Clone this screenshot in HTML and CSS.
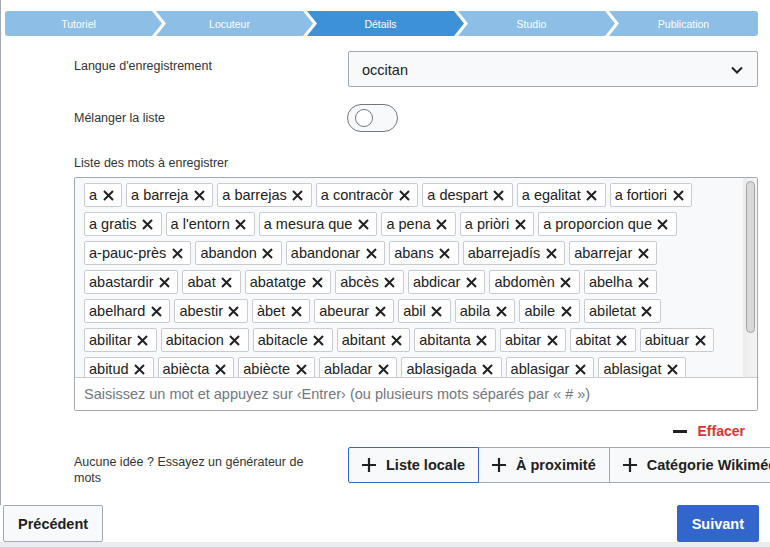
FILE: index.html
```html
<!DOCTYPE html>
<html lang="fr">
<head>
<meta charset="utf-8">
<title>Détails</title>
<link rel="stylesheet" href="styles.css">
</head>
<body>
<div class="page">
  <div class="main">
    <nav class="stepper">
      <div class="step step-first">Tutoriel</div>
      <div class="step">Locuteur</div>
      <div class="step step-active">Détails</div>
      <div class="step">Studio</div>
      <div class="step step-last">Publication</div>
    </nav>

    <div class="form">
      <div class="row row-lang">
        <div class="label label-top">Langue d'enregistrement</div>
        <div class="select">
          <span>occitan</span>
          <svg class="chev" width="12" height="8" viewBox="0 0 12 8"><path d="M1 1.5l5 5 5-5" fill="none" stroke="#202122" stroke-width="2"/></svg>
        </div>
      </div>

      <div class="row row-shuffle">
        <div class="label">Mélanger la liste</div>
        <div class="toggle"><span class="knob"></span></div>
      </div>

      <div class="words">
        <div class="label">Liste des mots à enregistrer</div>
        <div class="wordbox">
          <div class="tagarea">
            <div class="tags" id="tags"></div>
            <div class="scrollbar"><div class="thumb"></div></div>
          </div>
          <div class="wordinput">Saisissez un mot et appuyez sur ‹Entrer› (ou plusieurs mots séparés par «&nbsp;#&nbsp;»)</div>
        </div>
        <div class="clear-row">
          <button class="clear">
            <svg width="14" height="3" viewBox="0 0 14 3"><rect width="14" height="3" fill="#202122"/></svg>
            <span>Effacer</span>
          </button>
        </div>
      </div>

      <div class="row row-gen">
        <div class="label label-top">Aucune idée ? Essayez un générateur de mots</div>
        <div class="btn-group">
          <button class="gbtn gbtn-focus"><svg width="14" height="14" viewBox="0 0 14 14"><path d="M7 0v14M0 7h14" stroke="#202122" stroke-width="2.2"/></svg><span>Liste locale</span></button>
          <button class="gbtn"><svg width="14" height="14" viewBox="0 0 14 14"><path d="M7 0v14M0 7h14" stroke="#202122" stroke-width="2.2"/></svg><span>À proximité</span></button>
          <button class="gbtn"><svg width="14" height="14" viewBox="0 0 14 14"><path d="M7 0v14M0 7h14" stroke="#202122" stroke-width="2.2"/></svg><span>Catégorie Wikimédia</span></button>
        </div>
      </div>
    </div>
  </div>

  <footer class="footer">
    <button class="nav-btn">Précédent</button>
    <button class="nav-btn nav-primary">Suivant</button>
  </footer>
  <div class="band"></div>
</div>
<script src="script.js"></script>
</body>
</html>
```

FILE: script.js
```js
(function () {
  var rows = [
    ["a", "a barreja", "a barrejas", "a contracòr", "a despart", "a egalitat", "a fortiori"],
    ["a gratis", "a l'entorn", "a mesura que", "a pena", "a priòri", "a proporcion que"],
    ["a-pauc-près", "abandon", "abandonar", "abans", "abarrejadís", "abarrejar"],
    ["abastardir", "abat", "abatatge", "abcès", "abdicar", "abdomèn", "abelha"],
    ["abelhard", "abestir", "àbet", "abeurar", "abil", "abila", "abile", "abiletat"],
    ["abilitar", "abitacion", "abitacle", "abitant", "abitanta", "abitar", "abitat", "abituar"],
    ["abitud", "abiècta", "abiècte", "abladar", "ablasigada", "ablasigar", "ablasigat"]
  ];
  var box = document.getElementById("tags");
  var svgNS = "http://www.w3.org/2000/svg";
  rows.forEach(function (row) {
    var line = document.createElement("div");
    line.className = "tag-row";
    row.forEach(function (w) {
      var tag = document.createElement("span");
      tag.className = "tag";
      var t = document.createElement("span");
      t.className = "tag-text";
      t.textContent = w;
      var x = document.createElement("span");
      x.className = "tag-x";
      var svg = document.createElementNS(svgNS, "svg");
      svg.setAttribute("width", "11");
      svg.setAttribute("height", "11");
      svg.setAttribute("viewBox", "0 0 11 11");
      var p = document.createElementNS(svgNS, "path");
      p.setAttribute("d", "M1 1L10 10M10 1L1 10");
      p.setAttribute("stroke", "#202122");
      p.setAttribute("stroke-width", "2");
      p.setAttribute("fill", "none");
      svg.appendChild(p);
      x.appendChild(svg);
      tag.appendChild(t);
      tag.appendChild(x);
      line.appendChild(tag);
    });
    box.appendChild(line);
  });
})();
```

FILE: styles.css
```css
html, body {
  margin: 0;
  padding: 0;
  background: #fff;
  overflow: hidden;
}
body {
  font-family: "Liberation Sans", Arial, sans-serif;
  color: #202122;
  width: 770px;
  height: 547px;
}
button {
  font-family: inherit;
}

.main {
  box-sizing: border-box;
  height: 505px;
  border-left: 1px solid #a2a9b1;
  padding-top: 11px;
  overflow: hidden;
}

/* stepper */
.stepper {
  display: flex;
  margin-left: 4px;
  width: 753px;
  height: 25px;
}
.step {
  box-sizing: border-box;
  width: 157px;
  flex: none;
  margin-right: -6px;
  height: 25px;
  line-height: 26px;
  padding-right: 10px;
  text-align: center;
  font-size: 10.5px;
  color: #fff;
  background: #8cbee6;
  clip-path: polygon(0 0, calc(100% - 10px) 0, 100% 50%, calc(100% - 10px) 100%, 0 100%, 10px 50%);
}
.step-first {
  border-radius: 3px 0 0 3px;
  clip-path: polygon(0 0, calc(100% - 10px) 0, 100% 50%, calc(100% - 10px) 100%, 0 100%);
}
.step-last {
  flex: 1;
  width: auto;
  margin-right: 0;
  padding-right: 0;
  border-radius: 0 3px 3px 0;
  clip-path: polygon(0 0, 100% 0, 100% 100%, 0 100%, 10px 50%);
}
.step-active {
  background: #3d91d6;
}

/* form */
.form {
  margin-left: 73px;
  width: 684px;
}
.row {
  display: grid;
  grid-template-columns: 250px 410px;
  column-gap: 24px;
}
.label {
  font-size: 12.5px;
  line-height: 16px;
  color: #333;
}
.label-top {
  padding-top: 7px;
}
.row-lang {
  margin-top: 15px;
}
.select {
  box-sizing: border-box;
  height: 36px;
  display: flex;
  align-items: center;
  justify-content: space-between;
  padding: 1px 14px 0 13px;
  background: #f8f9fa;
  border: 1px solid #a2a9b1;
  border-radius: 2px;
  font-size: 14.5px;
  color: #202122;
}
.row-shuffle {
  margin-top: 17px;
  align-items: center;
}
.toggle {
  box-sizing: border-box;
  width: 51px;
  height: 28px;
  margin-left: -1px;
  border: 1px solid #72777d;
  border-radius: 14px;
  background: #f8f9fa;
  display: flex;
  align-items: center;
  padding-left: 7px;
}
.knob {
  box-sizing: border-box;
  width: 18px;
  height: 18px;
  border-radius: 50%;
  border: 1px solid #72777d;
  background: #fff;
}

/* word list */
.words {
  margin-top: 23px;
}
.wordbox {
  margin-top: 6px;
  border: 1px solid #a2a9b1;
  border-radius: 2px;
}
.tagarea {
  display: flex;
  height: 199px;
  background: #f8f9fa;
}
.tags {
  flex: 1;
  display: flex;
  flex-direction: column;
  gap: 5px;
  padding: 5px 8px 0 9px;
  overflow: hidden;
}
.tag-row {
  display: flex;
  gap: 4px;
  flex: none;
}
.tag {
  box-sizing: border-box;
  display: inline-flex;
  align-items: center;
  height: 24px;
  padding: 0 2px 0 4px;
  border: 1px solid #c8ccd1;
  border-radius: 2px;
  background: #fff;
  font-size: 14.5px;
  color: #202122;
  white-space: nowrap;
  flex: none;
}
.tag-x {
  width: 22px;
  display: flex;
  justify-content: center;
  align-items: center;
}
.scrollbar {
  box-sizing: border-box;
  width: 14px;
  flex: none;
  background: linear-gradient(to right, #ececec, #f4f4f4);
  padding: 3px 2px 0 3px;
}
.thumb {
  box-sizing: border-box;
  height: 152px;
  border: 1px solid #a3a3a3;
  border-radius: 5px;
  background: #d9d9d9;
}
.wordinput {
  box-sizing: border-box;
  height: 33px;
  border-top: 1px solid #c8ccd1;
  background: #fff;
  display: flex;
  align-items: center;
  padding-left: 9px;
  font-size: 14.5px;
  color: #72777d;
  white-space: nowrap;
}
.clear-row {
  display: flex;
  justify-content: flex-end;
  margin-top: 10px;
  padding-right: 13px;
}
.clear {
  display: flex;
  align-items: center;
  gap: 11px;
  border: 0;
  background: none;
  padding: 0;
  height: 20px;
  font-size: 14px;
  font-weight: bold;
  color: #d33;
}

/* generators */
.row-gen {
  margin-top: 6px;
}
.btn-group {
  display: flex;
  white-space: nowrap;
}
.gbtn {
  box-sizing: border-box;
  height: 36px;
  display: flex;
  align-items: center;
  gap: 10px;
  padding: 0 13px;
  margin-left: -1px;
  background: #f8f9fa;
  border: 1px solid #a2a9b1;
  font-size: 14.5px;
  font-weight: bold;
  color: #202122;
  flex: none;
}
.gbtn-focus {
  margin-left: 0;
  position: relative;
  z-index: 1;
  border-color: #36c;
  border-radius: 2px 0 0 2px;
}

/* footer */
.footer {
  display: flex;
  justify-content: space-between;
  height: 37px;
  padding: 0 11px 0 3px;
}
.nav-btn {
  box-sizing: border-box;
  height: 37px;
  padding: 0 14px;
  border: 1px solid #a2a9b1;
  border-radius: 2px;
  background: #f8f9fa;
  font-size: 14.5px;
  font-weight: bold;
  color: #202122;
}
.nav-primary {
  background: #36c;
  border-color: #36c;
  color: #fff;
}
.band {
  height: 5px;
  background: #eaecf0;
}
```
